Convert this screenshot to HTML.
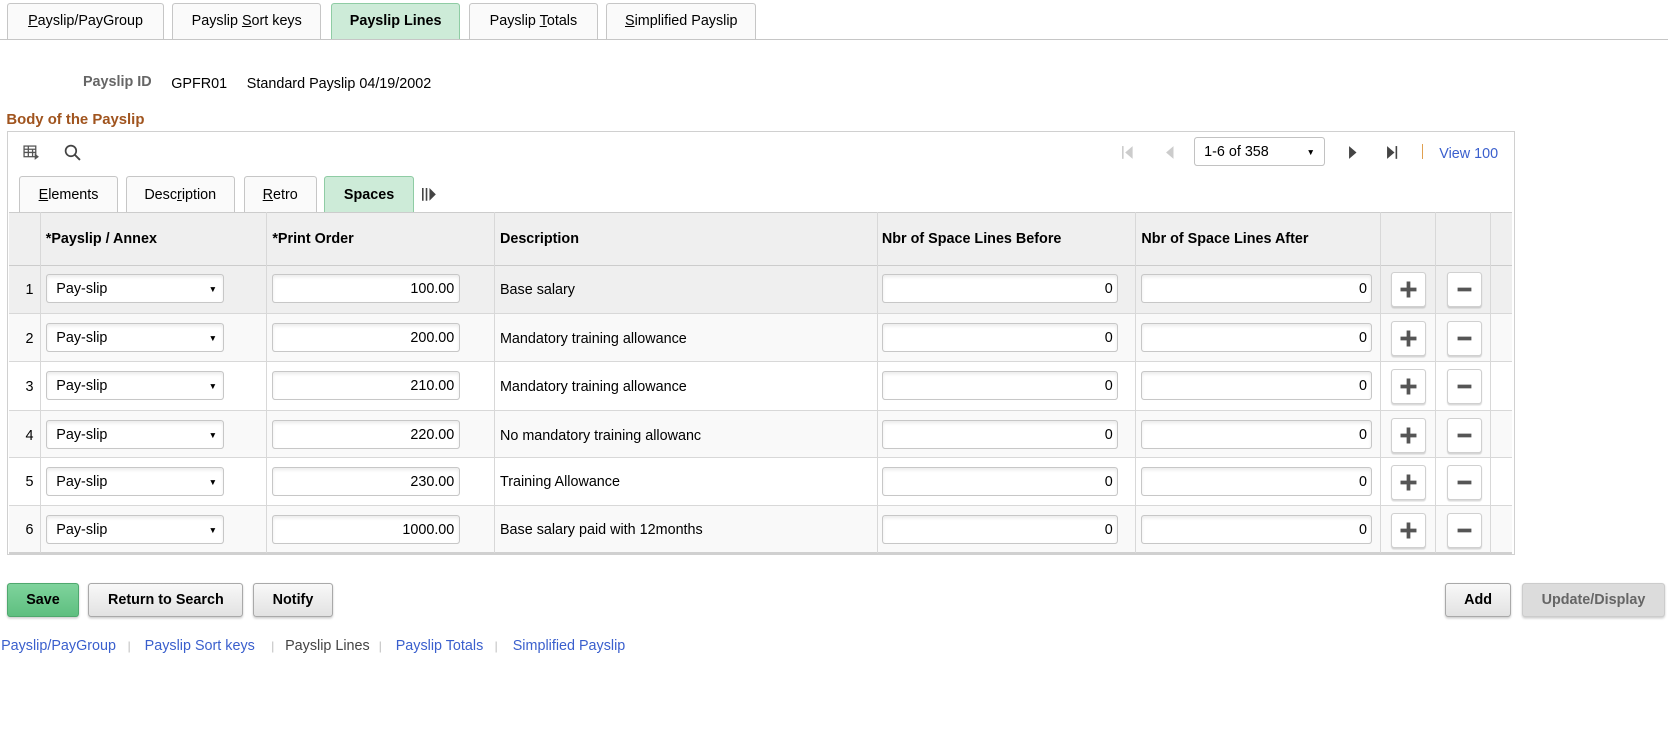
<!DOCTYPE html>
<html><head><meta charset="utf-8"><style>
html,body{margin:0;padding:0;background:#fff;width:1668px;height:731px;overflow:hidden}
#r{zoom:1.06378;position:relative;width:1568px;height:687px;font-family:"Liberation Sans",Arial,sans-serif;font-size:13.5px;color:#000}
.a{position:absolute}
.tab{position:absolute;top:3px;height:33px;border:1px solid #c6c6c6;border-bottom:none;border-radius:3px 3px 0 0;background:#fafafa;line-height:33px;text-align:center;color:#000}
.tab.on{background:#cdebd8;border-color:#8fcca4;font-weight:bold}
.it{position:absolute;top:165px;height:33px;border:1px solid #c6c6c6;border-bottom:none;border-radius:3px 3px 0 0;background:#fafafa;line-height:35px;text-align:center}
.it.on{background:#cdebd8;border-color:#8fcca4;font-weight:bold}
.row{position:absolute;left:8px;width:1413px;border-bottom:1px solid #d8d8d8}
.vl{position:absolute;top:199px;height:321px;width:1px;background:#d8d8d8}
.inp{position:absolute;height:27px;border:1px solid #c7c7c7;border-radius:3px;background:#fff;box-shadow:inset 0 2px 3px rgba(0,0,0,.08);line-height:28px;box-sizing:border-box}
.num{text-align:right;padding-right:4px}
.sel{padding-left:9px}
.sel:after{content:"▼";position:absolute;right:6px;top:0;font-size:8px}
.btn{position:absolute;width:31px;height:31px;border:1px solid #d0d0d0;border-radius:3px;background:#fff;box-shadow:0 1px 1px rgba(0,0,0,.15)}
.pb{position:absolute;top:548px;height:30px;border:1px solid #a9a9a9;border-radius:3px;background:linear-gradient(#f8f8f8,#e2e2e2);font-weight:bold;line-height:31px;text-align:center;box-shadow:0 1px 2px rgba(0,0,0,.2)}
.hd{position:absolute;top:217px;font-weight:bold}
.lk{color:#3a5fcd}
.sp{position:absolute;top:602px;color:#bbb;font-size:11px}
</style></head><body><div id="r">
<div class="tab" style="left:7px;width:145px"><u>P</u>ayslip/PayGroup</div>
<div class="tab" style="left:162px;width:138px">Payslip <u>S</u>ort keys</div>
<div class="tab on" style="left:311px;width:120px">Payslip Lines</div>
<div class="tab" style="left:441px;width:119px">Payslip <u>T</u>otals</div>
<div class="tab" style="left:570px;width:139px"><u>S</u>implified Payslip</div>
<div class="a" style="left:0;top:37px;width:1568px;height:1px;background:#c6c6c6"></div>

<div class="a" style="left:78px;top:70px;font-weight:bold;color:#666">Payslip ID</div>
<div class="a" style="left:161px;top:71px">GPFR01</div>
<div class="a" style="left:232px;top:71px">Standard Payslip 04/19/2002</div>
<div class="a" style="left:6px;top:105px;font-weight:bold;color:#a0541e;font-size:14px">Body of the Payslip</div>

<div class="a" style="left:7px;top:123px;width:1415px;height:397px;border:1px solid #d0d0d0"></div>
<svg class="a" style="left:22px;top:136px" width="16" height="15" viewBox="0 0 16 15"><g fill="none" stroke="#555" stroke-width="1.2"><rect x="1" y="1" width="11" height="10"/><path d="M1 4h11M1 7h11M5 1v10M9 4v7"/></g><path d="M11 8l4 3-4 3z" fill="#555"/></svg>
<svg class="a" style="left:60px;top:135px" width="16" height="16" viewBox="0 0 16 16"><circle cx="6.5" cy="6.5" r="5" fill="none" stroke="#444" stroke-width="1.6"/><path d="M10 10l5 5" stroke="#444" stroke-width="1.8"/></svg>

<svg class="a" style="left:1055px;top:136px" width="12" height="14"><rect x="0" y="1" width="1.5" height="12" fill="#ccc"/><path d="M10 1L3 7l7 6z" fill="#ccc"/></svg>
<svg class="a" style="left:1095px;top:136px" width="10" height="14"><path d="M8 1L1 7l7 6z" fill="#ccc"/></svg>
<div class="a" style="left:1122px;top:129px;width:124px;height:27px;border:1px solid #c2c2c2;border-radius:3px;line-height:28px;box-sizing:border-box;padding-left:9px">1-6 of 358<span style="position:absolute;right:9px;font-size:8px">▼</span></div>
<svg class="a" style="left:1267px;top:136px" width="10" height="14"><path d="M1 1l7 6-7 6z" fill="#444"/></svg>
<svg class="a" style="left:1303px;top:136px" width="12" height="14"><path d="M1 1l7 6-7 6z" fill="#444"/><rect x="9" y="1" width="1.5" height="12" fill="#444"/></svg>
<div class="a" style="left:1337px;top:135px;width:1px;height:14px;background:#e0a050"></div>
<div class="a lk" style="left:1353px;top:137px">View 100</div>

<div class="it" style="left:18px;width:91px"><u>E</u>lements</div>
<div class="it" style="left:118px;width:101px">Desc<u>r</u>iption</div>
<div class="it" style="left:229px;width:67px"><u>R</u>etro</div>
<div class="it on" style="left:305px;width:82px">Spaces</div>
<svg class="a" style="left:397px;top:177px" width="14" height="12"><rect x="0" y="0" width="1.5" height="12" fill="#444"/><rect x="3.5" y="0" width="1.5" height="12" fill="#444"/><path d="M7 0l6 6-6 6z" fill="#444"/></svg>

<div class="row" style="top:199px;height:49px;background:#efefef;border-top:1px solid #ccc;border-bottom:1px solid #ccc"></div>
<div class="row" style="top:250px;height:44px;background:#efefef"></div>
<div class="row" style="top:295px;height:44px;background:#f9f9f9"></div>
<div class="row" style="top:340px;height:45px;background:#fff"></div>
<div class="row" style="top:386px;height:44px;background:#f9f9f9"></div>
<div class="row" style="top:431px;height:44px;background:#fff"></div>
<div class="row" style="top:476px;height:43px;background:#f9f9f9;border-bottom:2px solid #d0d0d0"></div>
<div class="vl" style="left:38px"></div><div class="vl" style="left:250px"></div><div class="vl" style="left:464px"></div><div class="vl" style="left:824px"></div><div class="vl" style="left:1067px"></div><div class="vl" style="left:1297px"></div><div class="vl" style="left:1349px"></div><div class="vl" style="left:1401px"></div>

<div class="hd" style="left:43px">*Payslip / Annex</div>
<div class="hd" style="left:256px">*Print Order</div>
<div class="hd" style="left:470px">Description</div>
<div class="hd" style="left:829px">Nbr of Space Lines Before</div>
<div class="hd" style="left:1073px">Nbr of Space Lines After</div>

<div id="rows"></div>
<script>
var d=[["1","100.00","Base salary",258],["2","200.00","Mandatory training allowance",304],["3","210.00","Mandatory training allowance",349],["4","220.00","No mandatory training allowanc",395],["5","230.00","Training Allowance",439],["6","1000.00","Base salary paid with 12months",484]];
var h="";d.forEach(function(r){var t=r[3];
h+='<div class="a" style="left:24px;top:'+(t+7)+'px">'+r[0]+'</div>';
h+='<div class="inp sel" style="left:43px;top:'+t+'px;width:168px">Pay-slip</div>';
h+='<div class="inp num" style="left:256px;top:'+t+'px;width:176px">'+r[1]+'</div>';
h+='<div class="a" style="left:470px;top:'+(t+7)+'px">'+r[2]+'</div>';
h+='<div class="inp num" style="left:829px;top:'+t+'px;width:222px">0</div>';
h+='<div class="inp num" style="left:1073px;top:'+t+'px;width:217px">0</div>';
h+='<div class="btn" style="left:1308px;top:'+(t-2)+'px"><svg width="31" height="31"><path d="M15.5 8v15M8 15.5h15" stroke="#555" stroke-width="3.5"/></svg></div>';
h+='<div class="btn" style="left:1360px;top:'+(t-2)+'px"><svg width="31" height="31"><path d="M9 15.5h13" stroke="#555" stroke-width="3.5"/></svg></div>';
});document.getElementById("rows").innerHTML=h;
</script>

<div class="pb" style="left:7px;width:65px;background:linear-gradient(#7fd39c,#5fbf80);border-color:#4fa86e">Save</div>
<div class="pb" style="left:83px;width:144px">Return to Search</div>
<div class="pb" style="left:238px;width:73px">Notify</div>
<div class="pb" style="left:1358px;width:61px">Add</div>
<div class="pb" style="left:1431px;width:132px;background:#dcdcdc;color:#666;border-color:#ccc">Update/Display</div>

<div class="a lk" style="left:1px;top:600px">Payslip/PayGroup</div><span class="sp" style="left:120px">|</span>
<div class="a lk" style="left:136px;top:600px">Payslip Sort keys</div><span class="sp" style="left:255px">|</span>
<div class="a" style="left:268px;top:600px;color:#444">Payslip Lines</div><span class="sp" style="left:356px">|</span>
<div class="a lk" style="left:372px;top:600px">Payslip Totals</div><span class="sp" style="left:465px">|</span>
<div class="a lk" style="left:482px;top:600px">Simplified Payslip</div>
</div></body></html>
